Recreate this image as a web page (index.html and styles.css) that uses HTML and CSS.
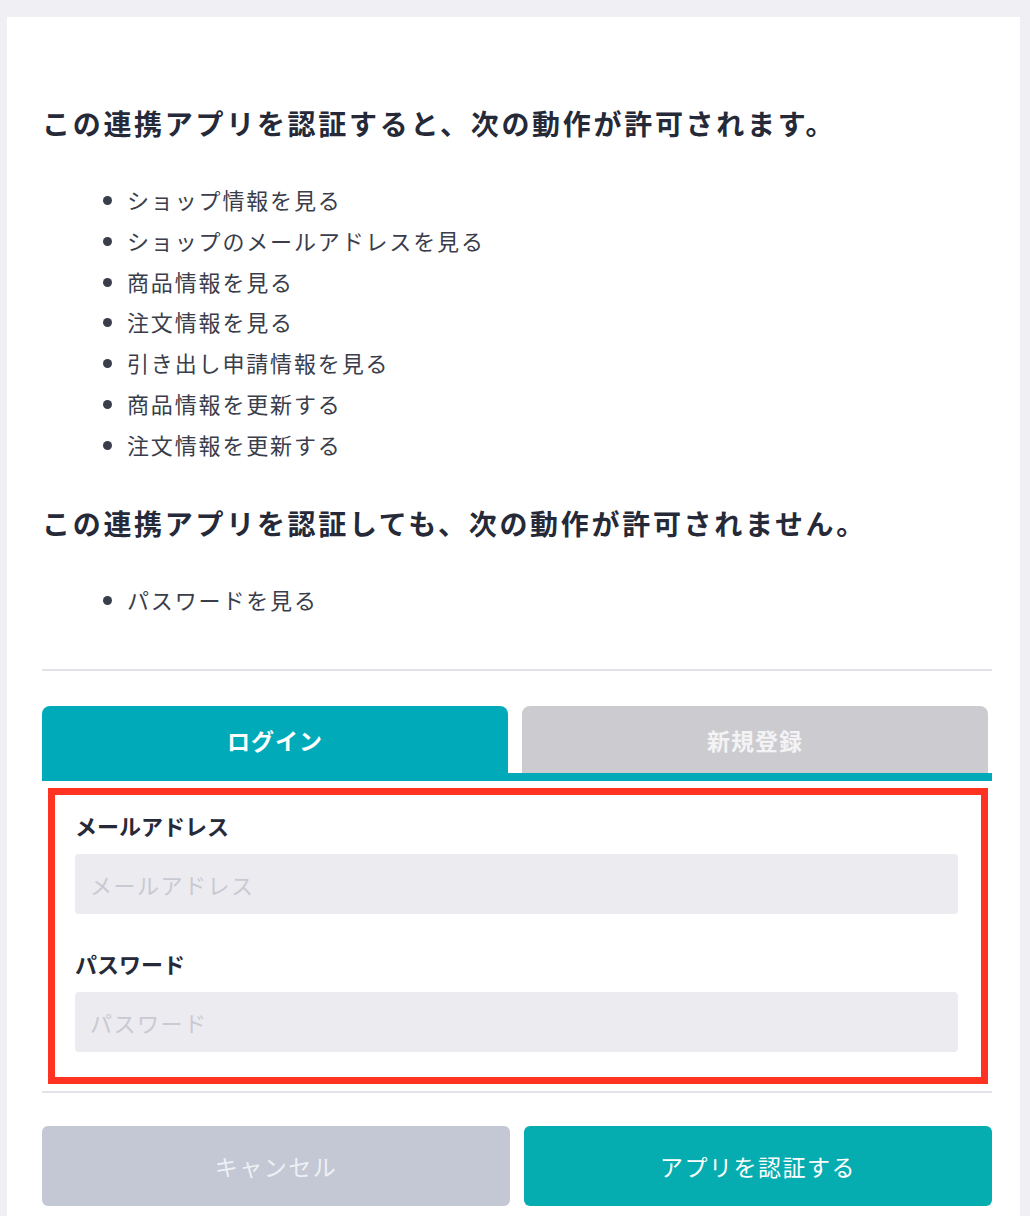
FILE: index.html
```html
<!DOCTYPE html>
<html lang="ja">

<head>
    <meta charset="UTF-8">
    <title>連携アプリの認証</title>
    <link rel="stylesheet" href="styles.css">
</head>

<body>
    <div class="auth-card">
        <h2 class="scope-title">この連携アプリを認証すると、次の動作が許可されます。</h2>
        <ul class="scope-list">
            <li>ショップ情報を見る</li>
            <li>ショップのメールアドレスを見る</li>
            <li>商品情報を見る</li>
            <li>注文情報を見る</li>
            <li>引き出し申請情報を見る</li>
            <li>商品情報を更新する</li>
            <li>注文情報を更新する</li>
        </ul>

        <h2 class="scope-title">この連携アプリを認証しても、次の動作が許可されません。</h2>
        <ul class="scope-list">
            <li>パスワードを見る</li>
        </ul>

        <hr class="divider divider-top">

        <div class="tabs">
            <button type="button" class="tab active">ログイン</button>
            <button type="button" class="tab">新規登録</button>
        </div>

        <form class="login-form" id="loginForm">
            <div class="field">
                <label for="email">メールアドレス</label>
                <input type="email" id="email" placeholder="メールアドレス">
            </div>
            <div class="field">
                <label for="password">パスワード</label>
                <input type="password" id="password" placeholder="パスワード">
            </div>
        </form>

        <hr class="divider divider-bottom">

        <div class="actions">
            <button type="button" class="btn btn-cancel">キャンセル</button>
            <button type="button" class="btn btn-approve">アプリを認証する</button>
        </div>
    </div>
</body>

</html>
```

FILE: styles.css
```css
:root {
    --teal: #00aab9;
    --teal-button: #05adb1;
    --text-color: #262a38;
    --page-bg: #efeff4;
    --border-color: #e2e2e8;
    --input-bg: #ecebef;
    --red: #ff3322;
}

body {
    font-family: "Noto Sans CJK JP", "Noto Sans", sans-serif;
    margin: 0;
    background-color: var(--page-bg);
    color: var(--text-color);
}

.auth-card {
    background: #ffffff;
    margin: 17px 10px 0 7px;
    padding: 86px 28px 12px 35px;
}

.scope-title {
    font-size: 28px;
    font-weight: bold;
    line-height: 40px;
    letter-spacing: 2.7px;
    margin: 0;
}

.scope-list {
    margin: 36px 0 38px;
    padding-left: 85px;
    font-size: 22px;
    line-height: 40.8px;
    letter-spacing: 1.85px;
    color: #3a3d4a;
}

.divider {
    border: none;
    border-top: 2px solid var(--border-color);
    margin: 0;
}

.divider-top {
    margin-top: 50px;
}

.tabs {
    display: grid;
    grid-template-columns: 466px 466px;
    gap: 14px;
    margin-top: 35px;
    border-bottom: 8px solid var(--teal);
}

.tab {
    height: 67px;
    border: none;
    border-radius: 8px 8px 0 0;
    background-color: #cccbcf;
    color: #f3f3f6;
    font-family: inherit;
    font-size: 23px;
    font-weight: bold;
    letter-spacing: 1px;
    padding: 0;
}

.tab.active {
    background-color: var(--teal);
    color: #ffffff;
}

.login-form {
    margin: 7px 4px 0 6px;
    border: 7px solid var(--red);
    padding: 15px 23px 25px 20px;
}

.field + .field {
    margin-top: 34px;
}

.field label {
    display: block;
    font-size: 22px;
    font-weight: bold;
    line-height: 30px;
    margin-bottom: 14px;
}

.field input {
    display: block;
    box-sizing: border-box;
    width: 100%;
    height: 60px;
    border: none;
    border-radius: 4px;
    background-color: var(--input-bg);
    padding: 0 15px;
    font-family: inherit;
    font-size: 22px;
    letter-spacing: 1.5px;
    color: var(--text-color);
}

.field input::placeholder {
    color: #c9c9d3;
}

.divider-bottom {
    margin-top: 7px;
}

.actions {
    display: grid;
    grid-template-columns: 1fr 1fr;
    gap: 14px;
    margin-top: 33px;
}

.btn {
    height: 80px;
    border: none;
    border-radius: 6px;
    font-family: inherit;
    font-size: 23px;
    letter-spacing: 1.5px;
    color: #ffffff;
}

.btn-cancel {
    background-color: #c3c8d4;
    color: #eef0f5;
}

.btn-approve {
    background-color: var(--teal-button);
}
```
